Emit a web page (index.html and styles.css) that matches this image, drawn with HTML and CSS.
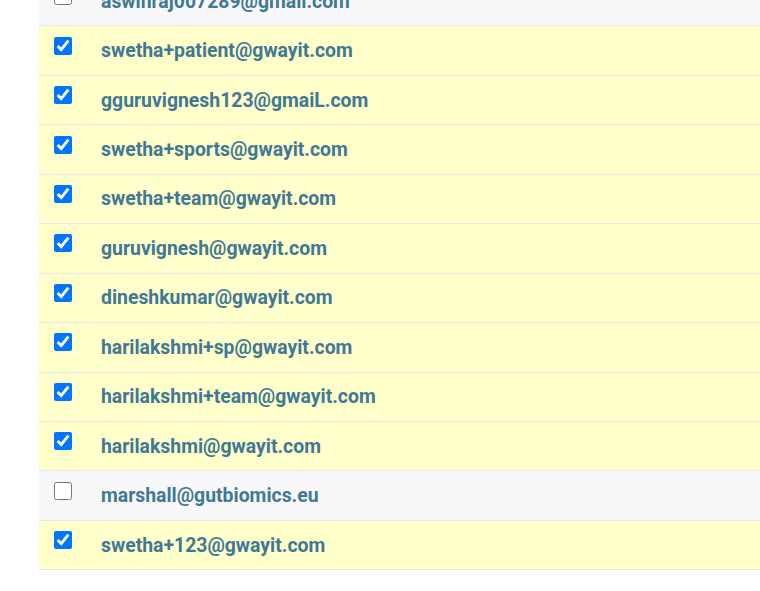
FILE: index.html
```html
<!DOCTYPE html>
<html>
<head>
<meta charset="utf-8">
<link rel="stylesheet" href="styles.css">
</head>
<body>
<div class="wrap">
<table class="results">
<tbody>
<tr class="row"><td class="cb"><input type="checkbox"></td><td class="em"><a href="#">aswinraj007289@gmail.com</a></td></tr>
<tr class="row sel"><td class="cb"><input type="checkbox" checked></td><td class="em"><a href="#">swetha+patient@gwayit.com</a></td></tr>
<tr class="row sel"><td class="cb"><input type="checkbox" checked></td><td class="em"><a href="#">gguruvignesh123@gmaiL.com</a></td></tr>
<tr class="row sel"><td class="cb"><input type="checkbox" checked></td><td class="em"><a href="#">swetha+sports@gwayit.com</a></td></tr>
<tr class="row sel"><td class="cb"><input type="checkbox" checked></td><td class="em"><a href="#">swetha+team@gwayit.com</a></td></tr>
<tr class="row sel"><td class="cb"><input type="checkbox" checked></td><td class="em"><a href="#">guruvignesh@gwayit.com</a></td></tr>
<tr class="row sel"><td class="cb"><input type="checkbox" checked></td><td class="em"><a href="#">dineshkumar@gwayit.com</a></td></tr>
<tr class="row sel"><td class="cb"><input type="checkbox" checked></td><td class="em"><a href="#">harilakshmi+sp@gwayit.com</a></td></tr>
<tr class="row sel"><td class="cb"><input type="checkbox" checked></td><td class="em"><a href="#">harilakshmi+team@gwayit.com</a></td></tr>
<tr class="row sel"><td class="cb"><input type="checkbox" checked></td><td class="em"><a href="#">harilakshmi@gwayit.com</a></td></tr>
<tr class="row"><td class="cb"><input type="checkbox"></td><td class="em"><a href="#">marshall@gutbiomics.eu</a></td></tr>
<tr class="row sel"><td class="cb"><input type="checkbox" checked></td><td class="em"><a href="#">swetha+123@gwayit.com</a></td></tr>
</tbody>
</table>
</div>
</body>
</html>
```
FILE: styles.css
```css
html, body {
  margin: 0;
  padding: 0;
  background: #fff;
  overflow: hidden;
}
.wrap {
  padding-left: 39px;
  margin-top: -23px;
}
.results {
  border-collapse: collapse;
  width: 800px;
  font-family: Roboto, "Liberation Sans", sans-serif;
}
.row td {
  height: 48.45px;
  padding: 0;
  border-bottom: 1px solid #e6e6e6;
  vertical-align: middle;
  background: #f8f8f8;
}
.row.sel td {
  background: #ffffcc;
}
.cb {
  width: 62px;
  padding-left: 15px !important;
  box-sizing: border-box;
}
.cb input {
  width: 18px;
  height: 18px;
  margin: 0;
  display: block;
  position: relative;
  top: -5px;
  accent-color: #0075ff;
}
.em a {
  color: #417893;
  font-weight: 700;
  font-size: 19.4px;
  text-decoration: none;
}
```
